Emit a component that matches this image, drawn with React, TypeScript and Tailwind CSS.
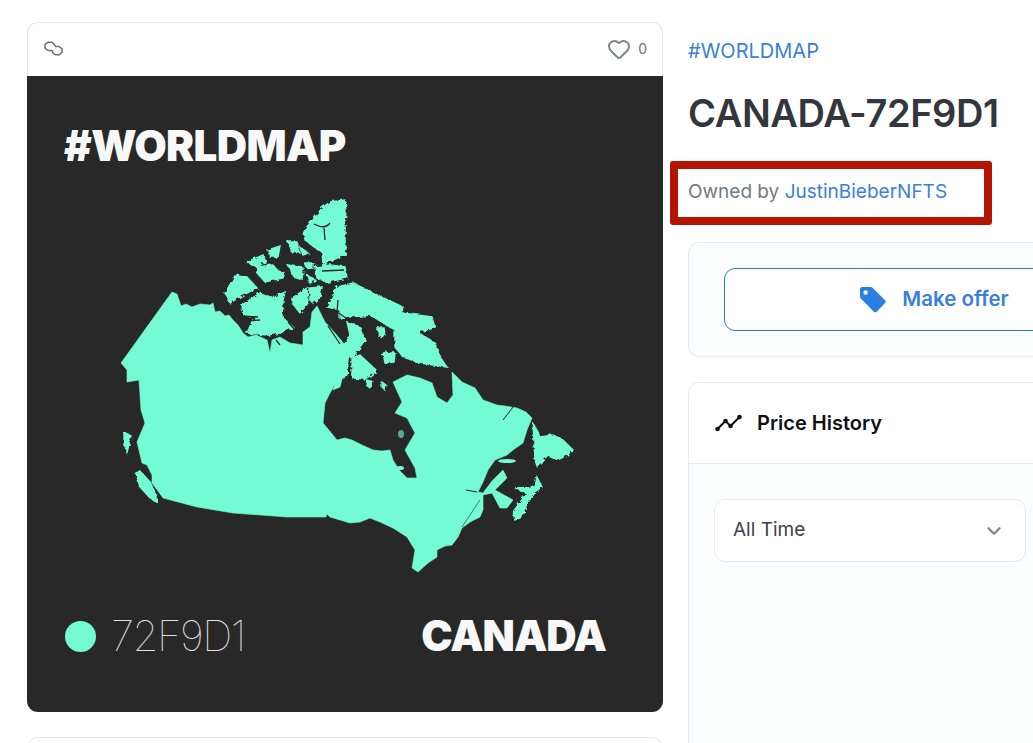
import { ChevronDown, Heart } from "lucide-react"

const font = "font-['Inter','Noto_Sans',sans-serif]"

function PolygonMark() {
    return (
        <svg width="20" height="17" viewBox="0 0 20 17" fill="none" stroke="#6f6f6f" strokeWidth="1.5" strokeLinejoin="round" strokeLinecap="round" className="-mt-[2px]">
            <path d="M7.500 10.500H4L1 8.200V4.500L4 2.200H7.500L10.500 4.500L11.500 6.500H15L18 8.800V12.500L15 14.800H11.500L8.500 12.500V10.800" />
        </svg>
    )
}

function TagIcon() {
    return (
        <svg width="28" height="28" viewBox="0 0 28 28" fill="#2a7fe0">
            <path d="M1 3C1 1.900 1.900 1 3 1H11.500c.8 0 1.500.3 2 .8l12.600 12.400c.8.8.8 2.100 0 2.900l-8.400 8.600c-.8.8-2.100.8-2.900 0L1.800 12.500C1.300 12 1 11.300 1 10.500V3zM6.600 4.300a2.200 2.200 0 1 0 0 4.400 2.200 2.200 0 0 0 0-4.400z" fillRule="evenodd" />
        </svg>
    )
}

function TrendIcon() {
    return (
        <svg width="28" height="18" viewBox="0 0 28 18" fill="none" stroke="#0f1115" strokeWidth="2" strokeLinecap="round" strokeLinejoin="round">
            <path d="M2.500 15l8-8 5 5 9-9" />
            <circle cx="2.500" cy="15" r="1.300" fill="#0f1115" />
            <circle cx="10.500" cy="7" r="1.300" fill="#0f1115" />
            <circle cx="15.500" cy="12" r="1.300" fill="#0f1115" />
            <circle cx="24.500" cy="3" r="1.300" fill="#0f1115" />
        </svg>
    )
}

// traced from the artwork, coordinates are page pixels
const mainland =
    "M172 292L177 294L181 306L186 304L192 307L200 304L210 305L213 303L215 312L220 311L225 316L229 315L233 320L238 325L243 333L248 337L256 335L267 340L270 353L272 340L280 337L290 343L303 345L303 332L310 327L312 312L317 306L325 322L335 333L345 345L349 353L348 363L345 368L340 387L333 390L335 384L330 393L325 403L323 423L328 429L337 440L345 438L352 440L362 445L373 450L382 451L390 450L393 460L399 470L407 478L417 478L415 468L405 450L415 433L407 418L395 413L402 402L393 382L407 375L420 378L432 383L437 397L447 403L453 395L452 372L462 382L475 388L483 400L497 405L505 406L517 408L526 412L532 418L527 430L523 443L513 450L507 455L495 460L488 470L483 482L478 492L483 493L492 481L503 470L507 478L495 490L513 500L507 508L500 508L492 493L483 495L483 510L480 517L470 522L462 528L458 537L452 545L445 546L437 550L437 557L428 563L418 572L412 568L415 550L407 537L393 528L380 522L370 518L360 522L350 523L340 520L330 517L327 514L326 517L287 517L233 513L197 507L163 498L158 491L152 483L152 475L147 465L142 463L137 442L145 423L141 410L139 380L127 382L127 370L121 363Z"

const islands = [
    // ellesmere, devon
    "M345 200L346 210L345 225L345 240L346 248L345 255L330 261L323 265L322 252L314 247L305 240L304 230L313 220L322 208L330 202Z",
    "M315 267L330 265L345 267L347 278L327 282L317 278Z",
    // queen elizabeth islands
    "M247 262L263 255L265 262L257 267Z",
    "M257 267L273 265L278 271L285 273L283 278L265 282L257 273Z",
    "M268 250L280 246L278 257L270 257Z",
    "M288 241L296 241L300 253L292 252Z",
    "M288 265L303 268L302 280L294 277Z",
    "M307 275L315 280L310 283Z",
    "M300 247L308 253L303 255Z",
    "M305 263L313 263L313 268L307 268Z",
    // banks
    "M235 276L247 277L257 288L243 295L230 303L225 293Z",
    // victoria
    "M242 305L260 293L273 298L273 307L275 297L285 292L283 300L282 317L293 327L280 333L267 335L247 333L252 322L258 317L243 315Z",
    "M292 298L307 288L308 303L300 313L292 303Z",
    "M310 288L322 287L320 297L313 303L310 300Z",
    // baffin
    "M327 307L337 287L353 283L363 288L377 295L403 307L402 313L432 317L435 328L417 332L425 337L435 343L440 357L447 367L420 363L403 357L395 347L395 330L370 315L340 318L340 310Z",
    // southampton and the peninsula
    "M347 322L360 327L365 340L353 357L340 360L345 345L350 335Z",
    "M352 358L360 355L377 371L365 379L352 378Z",
    "M340 363L348 363L347 375L340 378Z",
    "M383 353L395 353L394 362L385 363Z",
    "M377 328L384 328L385 335L380 337Z",
    "M367 380L373 382L369 387L366 385Z",
    "M382 382L386 385L385 390L382 387Z",
    // vancouver island, haida gwaii
    "M136 473L140 471L150 482L157 497L157 502L150 498L140 487Z",
    "M124 433L131 435L127 453L124 443Z",
    // newfoundland
    "M533 423L540 437L553 435L563 440L573 450L567 455L558 460L548 455L537 466L535 460Z",
    // cape breton, nova scotia
    "M537 477L542 487L533 493L520 518L515 520L513 512L527 493L515 488L535 487Z",
]

function CanadaMap() {
    return (
        <svg viewBox="27 76 636 636" className="absolute inset-0 h-full w-full">
            <defs>
                <filter id="rough" x="-5%" y="-5%" width="110%" height="110%">
                    <feTurbulence type="fractalNoise" baseFrequency="0.25" numOctaves="2" seed="4" />
                    <feDisplacementMap in="SourceGraphic" scale="5" />
                </filter>
            </defs>
            <path d={mainland} fill="#74fbd3" stroke="#74fbd3" strokeWidth="0.6" />
            <g filter="url(#rough)" fill="#74fbd3" stroke="#74fbd3" strokeWidth="1.4">
                {islands.map((d) => (
                    <path key={d} d={d} />
                ))}
            </g>
            <ellipse cx="507" cy="461" rx="9" ry="2" fill="#74fbd3" />
            <ellipse cx="401" cy="434" rx="3" ry="4" fill="#74fbd3" opacity="0.6" />
            <ellipse cx="400" cy="468" rx="4" ry="2" fill="#74fbd3" />
            <path d="M314 224Q325 230 330 223M324 228L325 240M322 271L344 270M338 300L337 312L346 318M280 345L276 340M242 316L258 317M244 321L260 320M288 322L295 330M328 326L340 344" stroke="#282828" strokeWidth="1.300" fill="none" />
            <path d="M503 420L513 407M466 490L477 492" stroke="#282828" strokeWidth="1" fill="none" />
            <path d="M462 527L480 500" stroke="#282828" strokeWidth="0.6" fill="none" />
        </svg>
    )
}

function NftCard() {
    return (
        <div className="w-[636px] shrink-0">
            <div className="rounded-[11px] border border-b-0 border-[#e8e8e8]">
                <div className="flex h-[53px] items-center justify-between pl-[16px] pr-[15px]">
                    <PolygonMark />
                    <div className="-mt-[2px] flex items-center gap-[6px] text-[14px] text-[#6f7378]">
                        <Heart size={24} strokeWidth={2} className="text-[#7f8489]" />
                        <span className="pl-[1px]">0</span>
                    </div>
                </div>
                <div className="relative -mx-px h-[636px] overflow-hidden rounded-b-[11px] bg-[#282828]">
                    <CanadaMap />
                    <div className="absolute left-[37px] top-[46px] text-[42px] leading-[48px] font-black tracking-[-0.6px] text-[#f8f8f8]">
                        #WORLDMAP
                    </div>
                    <div className="absolute inset-x-[38px] top-[536px] flex items-center">
                        <span className="h-[31px] w-[31px] rounded-full bg-[#74fbd3]" />
                        <span className="ml-[15px] text-[42px] leading-[48px] font-thin tracking-[-1.5px] text-[#e4e4e4]">72F9D1</span>
                        <span className="ml-auto mr-[19px] text-[42px] leading-[48px] font-black tracking-[-1px] text-[#f8f8f8]">CANADA</span>
                    </div>
                </div>
            </div>
            <div className="mt-[25px] h-[40px] rounded-t-[11px] border border-[#e8e8e8]" />
        </div>
    )
}

function Details() {
    return (
        <div className="w-[500px] shrink-0">
            <div className="pt-[16px] text-[20px] leading-[26px] text-[#3c7fd6]">#WORLDMAP</div>
            <h1 className="mt-[27px] text-[38px] leading-[44px] font-semibold tracking-[-0.4px] text-[#33363d]">CANADA-72F9D1</h1>
            <div className="relative mt-[44px] text-[19px] leading-[26px] text-[#707a83]">
                Owned by <span className="text-[#3c7fd6]">JustinBieberNFTS</span>
                <div className="absolute -left-[18px] -top-[18px] h-[64px] w-[322px] rounded-[3px] border-[8px] border-[#b51500]" />
            </div>
            <div className="mt-[37px] rounded-[11px] border border-[#e8e8e8] bg-[#fbfdff] pb-[25px] pl-[35px] pt-[25px]">
                <div className="flex h-[63px] w-[420px] items-center justify-center gap-[15px] rounded-[11px] border border-[#2f7cc4] bg-white text-[20.5px] font-semibold text-[#3a80d9]">
                    <TagIcon />
                    Make offer
                </div>
            </div>
            <div className="mt-[25px] overflow-hidden rounded-t-[11px] border border-[#e8e8e8] bg-[#fbfdff] pb-[200px]">
                <div className="flex h-[81px] items-center gap-[14px] border-b border-[#e8e8e8] bg-white pl-[26px] text-[20px] font-semibold text-[#0f1115]">
                    <TrendIcon />
                    Price History
                </div>
                <div className="ml-[25px] mt-[35px] flex h-[63px] w-[312px] items-center justify-between rounded-[11px] border border-[#e8e8e8] bg-white pl-[18px] pr-[20px] text-[19px] text-[#3e4149]">
                    All Time
                    <ChevronDown size={22} strokeWidth={2.6} className="text-[#7f8790]" />
                </div>
            </div>
        </div>
    )
}

export default function App() {
    return (
        <div className={`flex h-[743px] gap-[25px] overflow-hidden bg-white pl-[27px] pt-[22px] ${font}`}>
            <NftCard />
            <Details />
        </div>
    )
}
